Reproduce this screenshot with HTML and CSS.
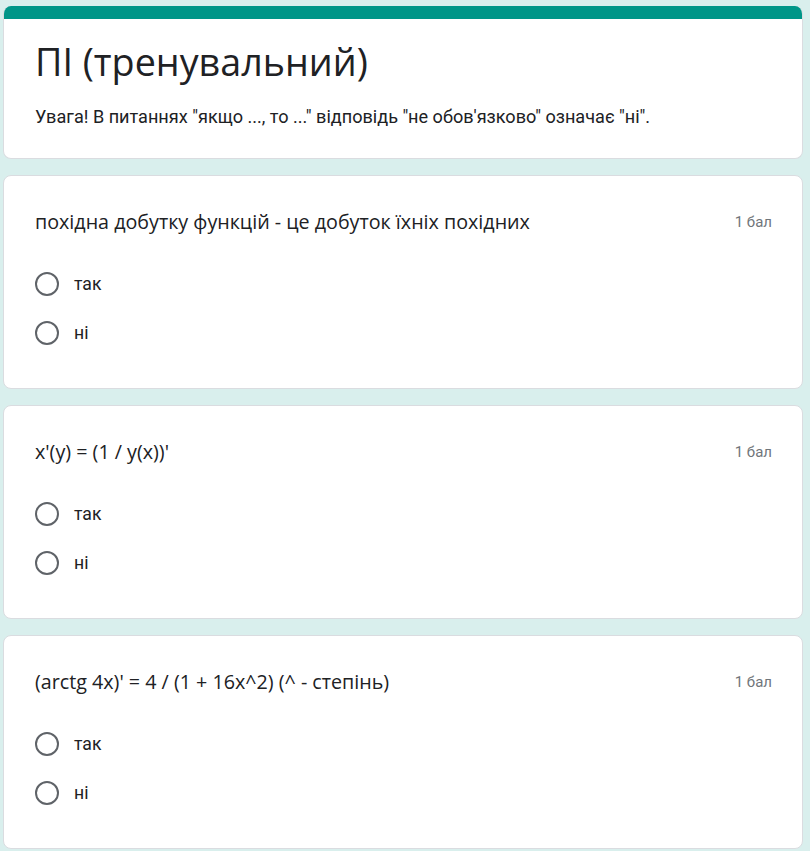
FILE: index.html
```html
<!DOCTYPE html>
<html lang="uk">
<head>
<meta charset="utf-8">
<link rel="stylesheet" href="styles.css">
</head>
<body>
<div class="page">
  <div class="card header">
    <div class="band"></div>
    <div class="header-body">
      <h1 class="title">ПІ (тренувальний)</h1>
      <p class="desc">Увага! В питаннях "якщо ..., то ..." відповідь "не обов'язково" означає "ні".</p>
    </div>
  </div>

  <div class="card question">
    <div class="q-head">
      <div class="q-text">похідна добутку функцій - це добуток їхніх похідних</div>
      <div class="points">1 бал</div>
    </div>
    <div class="options">
      <div class="option"><span class="radio"></span><span class="opt-label">так</span></div>
      <div class="option"><span class="radio"></span><span class="opt-label">ні</span></div>
    </div>
  </div>

  <div class="card question">
    <div class="q-head">
      <div class="q-text">x'(y) = (1 / y(x))'</div>
      <div class="points">1 бал</div>
    </div>
    <div class="options">
      <div class="option"><span class="radio"></span><span class="opt-label">так</span></div>
      <div class="option"><span class="radio"></span><span class="opt-label">ні</span></div>
    </div>
  </div>

  <div class="card question">
    <div class="q-head">
      <div class="q-text">(arctg 4x)' = 4 / (1 + 16x^2) (^ - степінь)</div>
      <div class="points">1 бал</div>
    </div>
    <div class="options">
      <div class="option"><span class="radio"></span><span class="opt-label">так</span></div>
      <div class="option"><span class="radio"></span><span class="opt-label">ні</span></div>
    </div>
  </div>
</div>
</body>
</html>
```

FILE: styles.css
```css
html, body {
  margin: 0;
  padding: 0;
  background: #d9efed;
}
body {
  font-family: Roboto, "Liberation Sans", sans-serif;
  color: #202124;
}
.page {
  width: 800px;
  margin-left: 3px;
  padding-top: 6px;
  display: flex;
  flex-direction: column;
  gap: 16px;
}
.card {
  background: #fff;
  border: 1px solid #dadce0;
  border-radius: 8px;
  overflow: hidden;
}
.header {
  border-top: none;
}
.band {
  height: 13px;
  background: #009688;
}
.header-body {
  padding: 19px 30px 29px 31px;
}
.title {
  margin: 0;
  font-family: "Open Sans", sans-serif;
  font-weight: 400;
  font-size: 37.7px;
  line-height: 48px;
  color: #202124;
}
.desc {
  margin: 19px 0 0;
  font-size: 18.1px;
  line-height: 24px;
  color: #202124;
}
.question {
  padding: 34px 30px 31px 31px;
}
.q-head {
  display: flex;
  justify-content: space-between;
  align-items: center;
}
.q-text {
  font-family: "Open Sans", sans-serif;
  font-size: 19.7px;
  line-height: 24px;
  color: #202124;
}
.points {
  font-size: 15px;
  line-height: 24px;
  color: #70757a;
}
.options {
  margin-top: 25px;
  display: flex;
  flex-direction: column;
}
.option {
  height: 49px;
  display: flex;
  align-items: center;
}
.radio {
  box-sizing: border-box;
  width: 24px;
  height: 24px;
  border: 2px solid #5f6368;
  border-radius: 50%;
  flex: none;
}
.opt-label {
  margin-left: 15px;
  font-size: 17.6px;
  line-height: 24px;
  color: #202124;
}
```
